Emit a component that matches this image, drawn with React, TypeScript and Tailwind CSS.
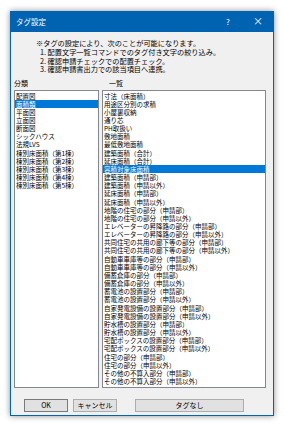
import React from 'react';

const categories = [
  '配置図',
  '面積類',
  '平面図',
  '立面図',
  '断面図',
  'シックハウス',
  '法規LVS',
  '棟別床面積（第1棟）',
  '棟別床面積（第2棟）',
  '棟別床面積（第3棟）',
  '棟別床面積（第4棟）',
  '棟別床面積（第5棟）',
];

const items = [
  '寸法（床面積）',
  '用途区分別の求積',
  '小屋裏収納',
  '通り芯',
  'PH取扱い',
  '敷地面積',
  '最低敷地面積',
  '建築面積（合計）',
  '延床面積（合計）',
  '容積対象床面積',
  '建築面積（申請部）',
  '建築面積（申請以外）',
  '延床面積（申請部）',
  '延床面積（申請以外）',
  '地階の住宅の部分（申請部）',
  '地階の住宅の部分（申請以外）',
  'エレベーターの昇降路の部分（申請部）',
  'エレベーターの昇降路の部分（申請以外）',
  '共同住宅の共用の廊下等の部分（申請部）',
  '共同住宅の共用の廊下等の部分（申請以外）',
  '自動車車庫等の部分（申請部）',
  '自動車車庫等の部分（申請以外）',
  '備蓄倉庫の部分（申請部）',
  '備蓄倉庫の部分（申請以外）',
  '蓄電池の設置部分（申請部）',
  '蓄電池の設置部分（申請以外）',
  '自家発電設備の設置部分（申請部）',
  '自家発電設備の設置部分（申請以外）',
  '貯水槽の設置部分（申請部）',
  '貯水槽の設置部分（申請以外）',
  '宅配ボックスの設置部分（申請部）',
  '宅配ボックスの設置部分（申請以外）',
  '住宅の部分（申請部）',
  '住宅の部分（申請以外）',
  'その他の不算入部分（申請部）',
  'その他の不算入部分（申請以外）',
];

const ListBox = ({ rows, selected, className }: { rows: string[]; selected: number; className: string }) => (
  <div className={`bg-white border border-[#828790] flex flex-col pt-[0.5px] text-[6.5px] ${className}`}>
    {rows.map((row, i) => (
      <div
        key={row}
        className={`h-[8.17px] leading-[8.17px] whitespace-nowrap pl-[1px] ${
          i === selected ? 'bg-[#0078d7] text-white' : 'text-black'
        }`}
      >
        {row}
      </div>
    ))}
  </div>
);

export default function App() {
  return (
    <div
      className="w-[285px] h-[429px] bg-white pt-[11px] pl-[10px] text-[7px]"
      style={{ fontFamily: '"Noto Sans CJK JP", "Noto Sans", sans-serif' }}
    >
      <div className="w-[264px] h-[405px] flex flex-col border border-[#0063b1] shadow-[0_0_6px_rgba(0,0,0,0.45)]">
        {/* title bar */}
        <div className="h-[20px] bg-[#0063b1] flex items-center text-white text-[7.5px] pl-[5px]">
          <span>タグ設定</span>
          <div className="ml-auto flex">
            <span className="w-[30px] text-center text-[8px]">?</span>
            <span className="w-[30px] text-center text-[10px] leading-none">×</span>
          </div>
        </div>

        <div className="flex-1 bg-[#f0f0f0] flex flex-col pt-[6px] text-black">
          <div className="pl-[25px] text-[7.2px]">
            <div className="h-[10px] leading-[10px]">※タグの設定により、次のことが可能になります。</div>
            <div className="pl-[4px]">
              <div className="h-[8.5px] leading-[8.5px]">1. 配置文字一覧コマンドでのタグ付き文字の絞り込み。</div>
              <div className="h-[8.5px] leading-[8.5px]">2. 確認申請チェックでの配置チェック。</div>
              <div className="h-[8.5px] leading-[8.5px]">3. 確認申請書出力での該当項目へ連携。</div>
            </div>
          </div>

          <div className="flex mt-[5.5px] h-[8px] leading-[8px] pl-[3px]">
            <span className="w-[88px]">分類</span>
            <span className="pl-[7px]">一覧</span>
          </div>

          <div className="flex mt-[3px] pl-[3px] gap-[3px] h-[298px]">
            <ListBox rows={categories} selected={1} className="w-[85px] h-full" />
            <ListBox rows={items} selected={9} className="w-[164px] h-full" />
          </div>

          <div className="flex mt-[11px] pl-[13px]">
            <button className="w-[44px] h-[13px] bg-[#e1e1e1] border border-[#7a7a7a] leading-none">OK</button>
            <button className="w-[44px] h-[13px] ml-[5px] bg-[#e1e1e1] border border-[#adadad] leading-none">キャンセル</button>
            <button className="w-[109px] h-[13px] ml-[18px] bg-[#e1e1e1] border border-[#adadad] leading-none">タグなし</button>
          </div>
        </div>
      </div>
    </div>
  );
}
